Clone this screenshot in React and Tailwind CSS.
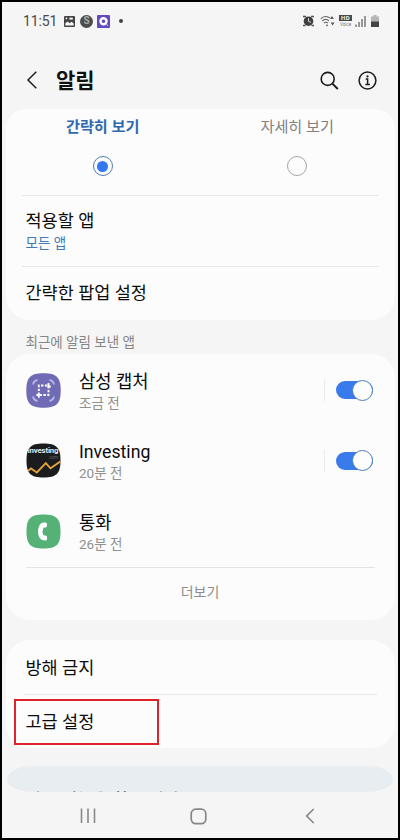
import { useState } from 'react';

function StatusBar() {
  return (
    <div className="flex h-[38px] items-center justify-between pl-[21px] pr-[19px] text-[#4a4a4a]">
      <div className="flex items-center">
        <span className="w-[34px] whitespace-nowrap font-[Roboto] text-[14px] leading-none tracking-[-0.1px]">11:51</span>
        <svg className="ml-[7px]" width="11" height="11" viewBox="0 0 11 11">
          <rect width="11" height="11" rx="1" fill="#444" />
          <path d="M1.3 9.6V7.2L3.8 5.6 5.5 7.2 7.6 5.8 9.7 7.4V9.6Z" fill="#f6f6f6" />
          <rect x="1.6" y="1.6" width="1.6" height="1.6" fill="#f6f6f6" />
          <rect x="5.4" y="1.6" width="3.4" height="2" fill="#f6f6f6" />
        </svg>
        <span className="ml-[5px] flex size-[13px] items-center justify-center rounded-full bg-[#4c4c4c] font-[Roboto] text-[10px] font-bold leading-none text-[#aaa]">S</span>
        <svg className="ml-[4px]" width="13" height="13" viewBox="0 0 13 13">
          <rect width="13" height="13" rx="1" fill="#6549bd" />
          <circle cx="6.5" cy="6.3" r="3" fill="none" stroke="#fff" strokeWidth="2.4" />
          <path d="M9.6 9.6 11 10.6" stroke="#fff" strokeWidth="1" />
        </svg>
        <span className="ml-[9px] size-[4px] rounded-full bg-[#444]" />
      </div>
      <div className="flex items-center">
        <svg width="11" height="12" viewBox="0 0 11 12">
          <path d="M0 1.5H3M8 1.5H11M0 10.5H2.5M8.5 10.5H11" stroke="#555" strokeWidth="1.6" />
          <circle cx="5.5" cy="6.2" r="4.8" fill="#3f3f3f" />
          <path d="M5.5 3.3V6.4L8 7.3" fill="none" stroke="#ddd" strokeWidth="1" />
        </svg>
        <svg className="ml-[6px]" width="15" height="12" viewBox="0 0 15 12" fill="none" stroke="#666">
          <path d="M.8 3.8C3.5 .8 7.5 .8 10.3 3.2M2.3 6C4.2 4.2 7 4.2 9 5.8M4 8.2C5.2 7.1 6.8 7.1 8 8" strokeWidth="1.1" />
          <circle cx="7" cy="10.3" r=".9" fill="#555" stroke="none" />
          <path d="M12 1 13.9 4H10.1ZM12.6 10.5 14.5 7.5H10.7Z" fill="#555" stroke="none" />
        </svg>
        <span className="ml-[4px] flex w-[13px] flex-col items-center whitespace-nowrap font-[Roboto]">
          <span className="h-[6px] w-full bg-[#4a4a4a] text-center text-[6px] font-bold leading-[6px] tracking-[0.5px] text-[#eee]">HD</span>
          <span className="mt-[1px] h-[5px] text-[4.5px] leading-[5px] text-[#777]">Voice</span>
        </span>
        <svg className="ml-[3px]" width="11" height="12" viewBox="0 0 11 12">
          <path d="M1 12V9.5M4 12V7M7 12V4M10 12V1" stroke="#666" strokeWidth="1.3" />
        </svg>
        <svg className="ml-[5px]" width="8" height="12" viewBox="0 0 8 12">
          <path d="M2.5 0h3v1.5H8V12H0V1.5h2.5Z" fill="#b5b5b5" />
          <path d="M0 6.5h8V12H0Z" fill="#444" />
        </svg>
      </div>
    </div>
  );
}

function Header() {
  return (
    <header className="flex h-[69px] items-center pl-[24px] pr-[21.5px] pt-[11px]">
      <svg width="12" height="18" viewBox="0 0 12 18" fill="none" stroke="#222" strokeWidth="1.5">
        <path d="M10.3 .7 2 9l8.3 8.3" />
      </svg>
      <h1 className="ml-[18px] flex-1 pt-[2px] text-[21px] font-bold leading-6 text-[#111]">알림</h1>
      <svg width="19" height="19" viewBox="0 0 19 19" fill="none" stroke="#1c1c1c" strokeWidth="1.6">
        <circle cx="7.7" cy="7.9" r="6.5" />
        <path d="M12.4 12.6 17.8 18" strokeWidth="1.9" />
      </svg>
      <svg className="ml-[19px]" width="19" height="19" viewBox="0 0 19 19" fill="none" stroke="#1c1c1c" strokeWidth="1.5">
        <circle cx="9.5" cy="9.5" r="8.4" />
        <path d="M7.7 8.1H9.6V13.6M7.3 13.6H11.9" />
        <circle cx="9.5" cy="5.4" r="1.1" fill="#1c1c1c" stroke="none" />
      </svg>
    </header>
  );
}

function ViewOption({ label, selected, onClick }) {
  return (
    <button onClick={onClick} className="flex flex-1 flex-col items-center pt-[8px]">
      <span className={selected ? 'text-[15.2px] font-bold leading-5 text-[#2f68b0]' : 'text-[15.2px] leading-5 text-[#808080]'}>
        {label}
      </span>
      <span
        className={
          selected
            ? 'mt-[19px] flex size-5 items-center justify-center rounded-full border border-[#527eaf]'
            : 'mt-[19px] flex size-5 items-center justify-center rounded-full border border-[#a5a5a5]'
        }
      >
        {selected && <span className="size-[11px] rounded-full bg-[#3478f0]" />}
      </span>
    </button>
  );
}

function Toggle({ on, onClick }) {
  return (
    <button onClick={onClick} className="flex h-[22px] w-[37px] items-center">
      <span className={on ? 'flex h-[18px] w-full items-center justify-end rounded-full bg-[#397bed]' : 'flex h-[18px] w-full items-center rounded-full bg-[#b0b0b0]'}>
        <span className="size-[21px] shrink-0 rounded-full border border-[#4c7fb8] bg-[#fdfdfd]" />
      </span>
    </button>
  );
}

function CaptureIcon() {
  return (
    <svg width="35" height="35" viewBox="0 0 35 35" fill="none">
      <path d="M17.5 .3C30.5 .3 34.7 4.5 34.7 17.5S30.5 34.7 17.5 34.7 .3 30.5 .3 17.5 4.5 .3 17.5 .3Z" fill="#6f6bb5" />
      <path d="M7 11.5C7.5 9 9 7.5 11.5 7M23.5 7C26 7.5 27.5 9 28 11.5M28 23.5C27.5 26 26 27.5 23.5 28M11.5 28C9 27.5 7.5 26 7 23.5" stroke="#b9b7e8" strokeWidth="1.8" />
      <path d="M12.8 22V12.5H22M22.5 13V22H13" stroke="#fff" strokeWidth="1.9" strokeDasharray="2.4 1.5" />
      <path d="M22.5 10V13.5H24.8M10.4 22H12.8V24.8" stroke="#fff" strokeWidth="1.9" />
    </svg>
  );
}

function InvestingIcon() {
  return (
    <svg width="35" height="35" viewBox="0 0 35 35">
      <defs>
        <clipPath id="investing-shape">
          <path d="M17.5 .5C30.5 .5 34.5 4.5 34.5 17.5S30.5 34.5 17.5 34.5 .5 30.5 .5 17.5 4.5 .5 17.5 .5Z" />
        </clipPath>
      </defs>
      <g clipPath="url(#investing-shape)">
        <rect width="35" height="35" fill="#1b1c1e" />
        <text x="1.5" y="10.3" fontSize="7.8" fontWeight="700" fill="#e4e4e4" fontFamily="Roboto, sans-serif" textLength="31">Investing</text>
        <text x="22" y="15.5" fontSize="4.5" fill="#666" fontFamily="Roboto, sans-serif">.com</text>
        <path d="M0 29.5 5 25.5 10.8 29.5 19.8 20.2 24.5 25.3 35 18" fill="none" stroke="#e5a23c" strokeWidth="1.9" />
      </g>
    </svg>
  );
}

function PhoneIcon() {
  return (
    <svg width="35" height="35" viewBox="0 0 35 35">
      <path d="M17.5 .5C30.5 .5 34.5 4.5 34.5 17.5S30.5 34.5 17.5 34.5 .5 30.5 .5 17.5 4.5 .5 17.5 .5Z" fill="#56b177" />
      <path
        d="M17.2 8.6 19.4 8.4Q21 8.5 21 10V12Q21 13.4 19.5 13.5L17.4 13.7Q15.7 17.5 17.4 21.2L19.5 21.6Q21 21.8 21 23.2V25.2Q21 26.6 19.4 26.5L17.2 26.3C10.4 25.2 10.4 9.8 17.2 8.6Z"
        fill="#fff"
      />
    </svg>
  );
}

const recentApps = [
  { id: 'capture', name: '삼성 캡처', time: '조금 전', Icon: CaptureIcon, hasToggle: true },
  { id: 'investing', name: 'Investing', time: '20분 전', Icon: InvestingIcon, hasToggle: true },
  { id: 'phone', name: '통화', time: '26분 전', Icon: PhoneIcon, hasToggle: false },
];

function AppRow({ app, on, onToggle }) {
  const { Icon } = app;
  return (
    <div className="flex h-[70.5px] items-center pl-[20px] pr-[22px]">
      <Icon />
      <div className="ml-[18.5px] flex-1 pt-[4px]">
        <p className="text-[17.7px] leading-[22px] text-[#0c0c0c]">{app.name}</p>
        <p className="text-[13.5px] leading-[21px] text-[#909090]">{app.time}</p>
      </div>
      {app.hasToggle && (
        <div className="flex items-center gap-[11px]">
          <span className="h-[22px] w-px bg-[#ebebeb]" />
          <Toggle on={on} onClick={onToggle} />
        </div>
      )}
    </div>
  );
}

export default function App() {
  const [view, setView] = useState('simple');
  const [enabled, setEnabled] = useState({ capture: true, investing: true });

  const toggleApp = (id) => setEnabled((prev) => ({ ...prev, [id]: !prev[id] }));

  return (
    <div className="h-[840px] w-[400px] overflow-hidden border-2 border-black bg-[#f5f5f5] font-[Roboto,'Noto_Sans_CJK_KR',sans-serif]">
      <StatusBar />
      <Header />

      <main className="px-[3.5px]">
        <section className="h-[211px] rounded-b-[24px] rounded-t-[20px] bg-[#fcfcfc]">
          <div className="flex h-[86px] items-start">
            <ViewOption label="간략히 보기" selected={view === 'simple'} onClick={() => setView('simple')} />
            <ViewOption label="자세히 보기" selected={view === 'detail'} onClick={() => setView('detail')} />
          </div>
          <div className="mx-[16px] h-px bg-[#e8e8e8]" />
          <div className="h-[70px] px-[20px] pt-[14px]">
            <p className="text-[17.5px] leading-[23px] text-[#0c0c0c]">적용할 앱</p>
            <p className="text-[13.5px] leading-5 text-[#4278b5]">모든 앱</p>
          </div>
          <div className="mx-[16px] h-px bg-[#e8e8e8]" />
          <p className="px-[20px] pt-[14px] text-[17.5px] leading-6 text-[#0c0c0c]">간략한 팝업 설정</p>
        </section>

        <h2 className="h-[34px] px-[20px] pt-[12px] text-[13.5px] leading-5 text-[#858585]">최근에 알림 보낸 앱</h2>

        <section className="h-[266px] rounded-[24px] bg-[#fcfcfc] pt-[1px]">
          {recentApps.map((app) => (
            <AppRow key={app.id} app={app} on={enabled[app.id]} onToggle={() => toggleApp(app.id)} />
          ))}
          <div className="mx-[20px] h-px bg-[#e4e4e4]" />
          <button className="block w-full pt-[14px] text-center text-[14px] leading-5 text-[#8c8c8c]">더보기</button>
        </section>

        <section className="mt-[20px] h-[108px] rounded-[24px] bg-[#fcfcfc]">
          <p className="h-[54px] px-[20px] pt-[16px] text-[17.5px] leading-6 text-[#0c0c0c]">방해 금지</p>
          <div className="mx-[18px] h-px bg-[#e8e8e8]" />
          <div className="ml-[8.5px] mt-[4px] flex h-[46px] w-[145px] items-center border-2 border-[#e02328] pl-[9.5px]">
            <p className="text-[17.5px] leading-6 text-[#0c0c0c]">고급 설정</p>
          </div>
        </section>
      </main>

      {/* suggestion panel, its text mostly scrolled under the nav bar */}
      <div className="mx-[5px] mt-[18px] h-[26px] overflow-hidden rounded-[26px/13px] bg-[#e8edf2]">
        <p className="pl-[19px] pt-[22px] text-[17px] font-medium leading-6 text-[#777]">다른 기능을 찾고 있나요?</p>
      </div>

      <nav className="flex h-[46px] items-center justify-between pl-[78px] pr-[83px] pt-[2px] text-[#888]">
        <svg width="16" height="16" viewBox="0 0 16 16" stroke="currentColor" strokeWidth="1.6">
          <path d="M1.5 .5V15M8 .5V15M14.5 .5V15" />
        </svg>
        <svg className="mr-[4px]" width="17" height="17" viewBox="0 0 17 17" fill="none" stroke="currentColor" strokeWidth="1.7">
          <rect x="1.2" y="1.2" width="14.6" height="14.4" rx="4.5" />
        </svg>
        <svg width="10" height="16" viewBox="0 0 10 16" fill="none" stroke="currentColor" strokeWidth="1.7">
          <path d="M8.7 1 1.7 8l7 7" />
        </svg>
      </nav>
    </div>
  );
}
